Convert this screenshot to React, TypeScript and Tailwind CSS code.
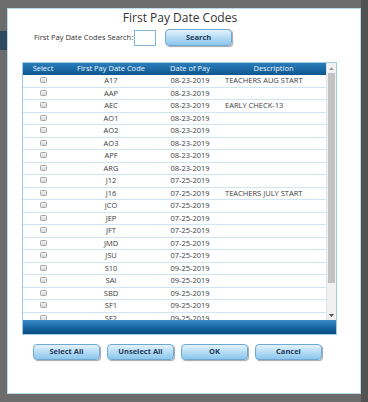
import React from "react";

const rows: [string, string, string][] = [
  ["A17", "08-23-2019", "TEACHERS AUG START"],
  ["AAP", "08-23-2019", ""],
  ["AEC", "08-23-2019", "EARLY CHECK-13"],
  ["AO1", "08-23-2019", ""],
  ["AO2", "08-23-2019", ""],
  ["AO3", "08-23-2019", ""],
  ["APF", "08-23-2019", ""],
  ["ARG", "08-23-2019", ""],
  ["J12", "07-25-2019", ""],
  ["J16", "07-25-2019", "TEACHERS JULY START"],
  ["JCO", "07-25-2019", ""],
  ["JEP", "07-25-2019", ""],
  ["JFT", "07-25-2019", ""],
  ["JMD", "07-25-2019", ""],
  ["JSU", "07-25-2019", ""],
  ["S10", "09-25-2019", ""],
  ["SAI", "09-25-2019", ""],
  ["SBD", "09-25-2019", ""],
  ["SF1", "09-25-2019", ""],
  ["SF2", "09-25-2019", ""],
];

function Btn({ label, w = "w-[67px]", h = "h-[16px]" }: { label: string; w?: string; h?: string }) {
  return (
    <button
      className={`${w} ${h} rounded-[4px] border border-[#6fa9d2] bg-gradient-to-b from-[#e3f3fc] via-[#b6dcf4] to-[#8cc6ec] text-[7.5px] font-bold text-[#1d3a58] shadow-[1px_1px_1px_rgba(0,0,0,0.35)] flex items-center justify-center leading-none`}
    >
      {label}
    </button>
  );
}

export default function App() {
  return (
    <div
      className="w-[368px] h-[402px] bg-[#6c6c6c] relative overflow-hidden"
      style={{ fontFamily: "'Open Sans', 'Liberation Sans', sans-serif" }}
    >
      <div className="absolute left-0 top-[31px] w-[7px] h-[19px] bg-[#2e4a5e]" />
      <div className="absolute right-0 top-0 w-[7px] h-[402px] bg-[#525252]" />
      <div className="absolute left-[7px] top-[8px] w-[354px] h-[386px] bg-white border border-[#b7dcee] flex flex-col">
        <div className="w-[316px] ml-[14px] flex flex-col items-center">
          <div className="h-[17px] text-[12px] leading-[17px] text-[#333]">First Pay Date Codes</div>
          <div className="mt-[3px] flex items-center h-[17px] self-start ml-[12px]">
            <span className="text-[7.5px] text-[#333] leading-none">First Pay Date Codes Search:</span>
            <div className="ml-px w-[22px] h-[16px] border border-[#7fb6da] bg-white" />
            <div className="ml-[9px]">
              <Btn label="Search" h="h-[17px]" />
            </div>
          </div>
        </div>
        <div className="ml-[14px] mt-[16px] w-[315px] border border-[#9fcde6] flex flex-col">
          <div className="flex h-[257px]">
            <div className="w-[303px] flex flex-col">
              <div className="h-[12px] flex text-[7.5px] text-[#eef6fc] leading-none bg-gradient-to-b from-[#2a7dbb] to-[#0c5790]">
                <div className="w-[40px] flex items-center justify-center">Select</div>
                <div className="w-[96px] flex items-center justify-center">First Pay Date Code</div>
                <div className="w-[62px] flex items-center justify-center">Date of Pay</div>
                <div className="w-[105px] flex items-center justify-center">Description</div>
              </div>
              <div className="flex-1 overflow-hidden">
                {rows.map(([code, date, desc]) => (
                  <div key={code} className="h-[12.5px] flex border-b border-[#cfe5f1] text-[7.5px] text-[#3c3c3c] leading-none">
                    <div className="w-[40px] flex justify-center pt-[2px]">
                      <div className="w-[7px] h-[6px] rounded-[1.5px] border border-[#a3a3a3] bg-gradient-to-b from-[#f4f4f4] to-[#d9d9d9]" />
                    </div>
                    <div className="w-[96px] flex items-center justify-center">{code}</div>
                    <div className="w-[62px] flex items-center justify-center">{date}</div>
                    <div className="w-[105px] flex items-center pl-[4px]">{desc}</div>
                  </div>
                ))}
              </div>
            </div>
            <div className="w-[10px] bg-[#f1f1f1] border-l border-[#e2e2e2] flex flex-col items-center">
              <div className="h-[10px] flex items-center justify-center">
                <svg width="5" height="3" viewBox="0 0 5 3"><path d="M0 3 L2.5 0 L5 3 Z" fill="#a0a0a0" /></svg>
              </div>
              <div className="w-[7px] h-[210px] bg-[#c2c2c2]" />
              <div className="flex-1" />
              <div className="h-[10px] flex items-center justify-center">
                <svg width="5" height="3" viewBox="0 0 5 3"><path d="M0 0 L5 0 L2.5 3 Z" fill="#505050" /></svg>
              </div>
            </div>
          </div>
          <div className="h-[14px] bg-gradient-to-b from-[#3a8cc8] via-[#1567a4] to-[#0a4a80]" />
        </div>
        <div className="ml-[25px] mt-[9px] flex gap-[7px]">
          <Btn label="Select All" />
          <Btn label="Unselect All" />
          <Btn label="OK" />
          <Btn label="Cancel" />
        </div>
      </div>
    </div>
  );
}
